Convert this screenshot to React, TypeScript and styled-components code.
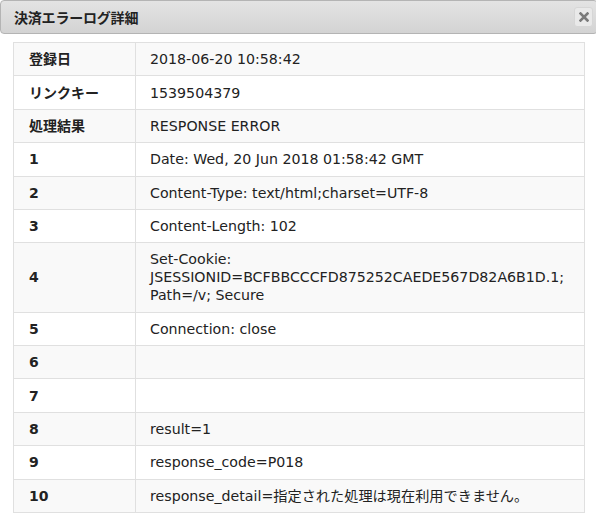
import React from 'react';
import styled, { createGlobalStyle } from 'styled-components';

const GlobalStyle = createGlobalStyle`
  html, body {
    margin: 0;
    padding: 0;
    background: #fff;
  }
  body {
    font-family: 'DejaVu Sans', Verdana, 'Noto Sans CJK JP', sans-serif;
    font-size: 14px;
    color: #222;
  }
`;

interface LogRow {
  label: string;
  value: string[];
}

const rows: LogRow[] = [
  { label: '登録日', value: ['2018-06-20 10:58:42'] },
  { label: 'リンクキー', value: ['1539504379'] },
  { label: '処理結果', value: ['RESPONSE ERROR'] },
  { label: '1', value: ['Date: Wed, 20 Jun 2018 01:58:42 GMT'] },
  { label: '2', value: ['Content-Type: text/html;charset=UTF-8'] },
  { label: '3', value: ['Content-Length: 102'] },
  {
    label: '4',
    value: [
      'Set-Cookie:',
      'JSESSIONID=BCFBBCCCFD875252CAEDE567D82A6B1D.1;',
      'Path=/v; Secure',
    ],
  },
  { label: '5', value: ['Connection: close'] },
  { label: '6', value: [] },
  { label: '7', value: [] },
  { label: '8', value: ['result=1'] },
  { label: '9', value: ['response_code=P018'] },
  { label: '10', value: ['response_detail=指定された処理は現在利用できません。'] },
];

export default function App() {
  return (
    <>
      <GlobalStyle />
      <Dialog>
        <TitleBar>
          <Title>決済エラーログ詳細</Title>
          <CloseButton title='close'>
            <svg width='10' height='10' viewBox='0 0 10 10'>
              <path
                d='M1.5 1.5 L8.5 8.5 M8.5 1.5 L1.5 8.5'
                stroke='#7a7a7a'
                strokeWidth='2.6'
                strokeLinecap='square'
              />
            </svg>
          </CloseButton>
        </TitleBar>
        <Content>
          <Table>
            <tbody>
              {rows.map((row, index) => (
                <Tr key={row.label} $striped={index % 2 === 0}>
                  <Th>{row.label}</Th>
                  <Td>
                    {row.value.map((line, i) => (
                      <Line key={i}>{line}</Line>
                    ))}
                  </Td>
                </Tr>
              ))}
            </tbody>
          </Table>
        </Content>
      </Dialog>
    </>
  );
}

const Dialog = styled.div`
  width: 598px;
  display: flex;
  flex-direction: column;
`;

const TitleBar = styled.div`
  height: 32px;
  display: flex;
  align-items: center;
  justify-content: space-between;
  padding: 0 4px 0 13px;
  border: 1px solid #b4b4b4;
  border-radius: 4px;
  background: linear-gradient(#e3e3e3, #d3d3d3);
`;

const Title = styled.span`
  font-weight: bold;
  font-size: 14px;
  color: #222;
  letter-spacing: -0.2px;
`;

const CloseButton = styled.button`
  width: 19px;
  height: 20px;
  padding: 0;
  display: flex;
  align-items: center;
  justify-content: center;
  border: 1px solid #d6d6d6;
  border-radius: 3px;
  background: #e9e9e9;
  cursor: pointer;
`;

const Content = styled.div`
  padding: 8px 11px 14px 13px;
`;

const Table = styled.table`
  width: 572px;
  border-collapse: collapse;
  border: 1px solid #e0e0e0;
`;

const Tr = styled.tr<{ $striped: boolean }>`
  background: ${p => (p.$striped ? '#f9f9f9' : '#fff')};
`;

const Th = styled.th`
  width: 91px;
  text-align: left;
  font-weight: bold;
  padding: 7.2px 15px;
  line-height: 18px;
  border: 1px solid #e0e0e0;
  vertical-align: middle;
`;

const Td = styled.td`
  padding: 7.2px 14px;
  font-size: 14.2px;
  line-height: 18px;
  height: 18px;
  border: 1px solid #e0e0e0;
  vertical-align: middle;
`;

const Line = styled.div`
  white-space: nowrap;
`;
